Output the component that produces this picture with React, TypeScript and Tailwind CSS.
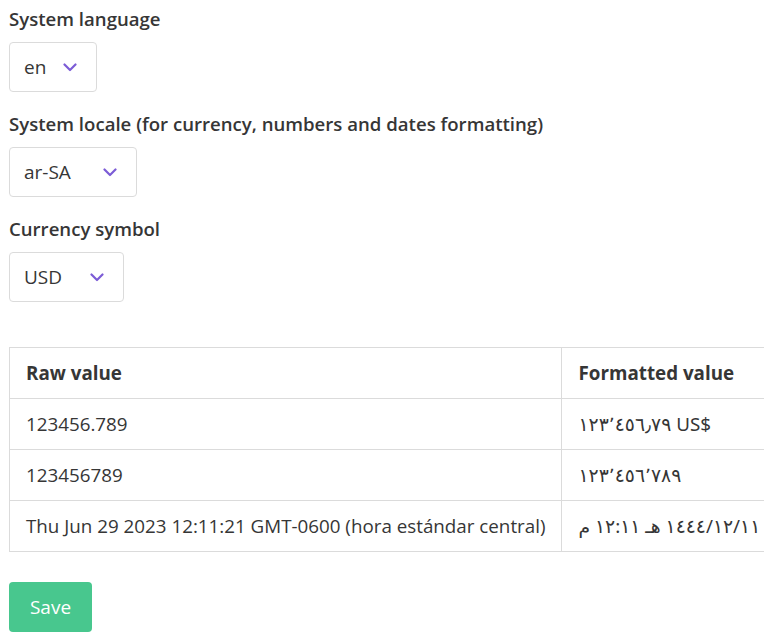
import React from "react";

const Chev = () => (
  <svg width="14" height="9" viewBox="0 0 14 9" className="ml-auto">
    <path d="M1.5 1.5 L7 7 L12.5 1.5" fill="none" stroke="#7c5cd6" strokeWidth="2.2" strokeLinecap="round" strokeLinejoin="round" />
  </svg>
);

const Select = ({ v, w }: { v: string; w: string }) => (
  <div className={`flex items-center h-[50px] border border-[#dbdbdb] rounded-[4px] pl-[14px] pr-[19px] text-[19px] text-[#363636] ${w}`}>
    <span>{v}</span>
    <Chev />
  </div>
);

export default function App() {
  const rows = [
    ["123456.789", "١٢٣٬٤٥٦٫٧٩ US$"],
    ["123456789", "١٢٣٬٤٥٦٬٧٨٩"],
    ["Thu Jun 29 2023 12:11:21 GMT-0600 (hora estándar central)", "١٤٤٤/١٢/١١ هـ ١٢:١١ م"],
  ];
  return (
    <div className="px-[9px] pt-[5px] text-[#363636]" style={{ fontFamily: '"Open Sans", "Noto Sans", sans-serif' }}>
      <div className="text-[18.6px] font-semibold leading-[27px]">System language</div>
      <div className="mt-[10px]"><Select v="en" w="w-[88px]" /></div>
      <div className="text-[18.6px] font-semibold leading-[27px] mt-[18px]">System locale (for currency, numbers and dates formatting)</div>
      <div className="mt-[10px]"><Select v="ar-SA" w="w-[128px]" /></div>
      <div className="text-[18.6px] font-semibold leading-[27px] mt-[18px]">Currency symbol</div>
      <div className="mt-[10px]"><Select v="USD" w="w-[115px]" /></div>
      <table className="mt-[45px] w-[743px] border-collapse text-[18.8px]">
        <thead>
          <tr className="h-[51px]">
            <th className="border border-[#dbdbdb] text-left font-bold px-[16px] w-[557px]">Raw value</th>
            <th className="border border-[#dbdbdb] text-left font-bold px-[16px] whitespace-nowrap">Formatted value</th>
          </tr>
        </thead>
        <tbody>
          {rows.map((r, i) => (
            <tr key={i} className="h-[51px]">
              <td className="border border-[#dbdbdb] px-[16px] whitespace-nowrap">{r[0]}</td>
              <td className="border border-[#dbdbdb] px-[16px] whitespace-nowrap" style={{ fontFamily: '"Noto Sans", "DejaVu Sans", sans-serif' }}>{r[1]}</td>
            </tr>
          ))}
        </tbody>
      </table>
      <button className="mt-[30px] h-[50px] w-[83px] rounded-[4px] bg-[#48c78e] text-white text-[19px]">Save</button>
    </div>
  );
}
